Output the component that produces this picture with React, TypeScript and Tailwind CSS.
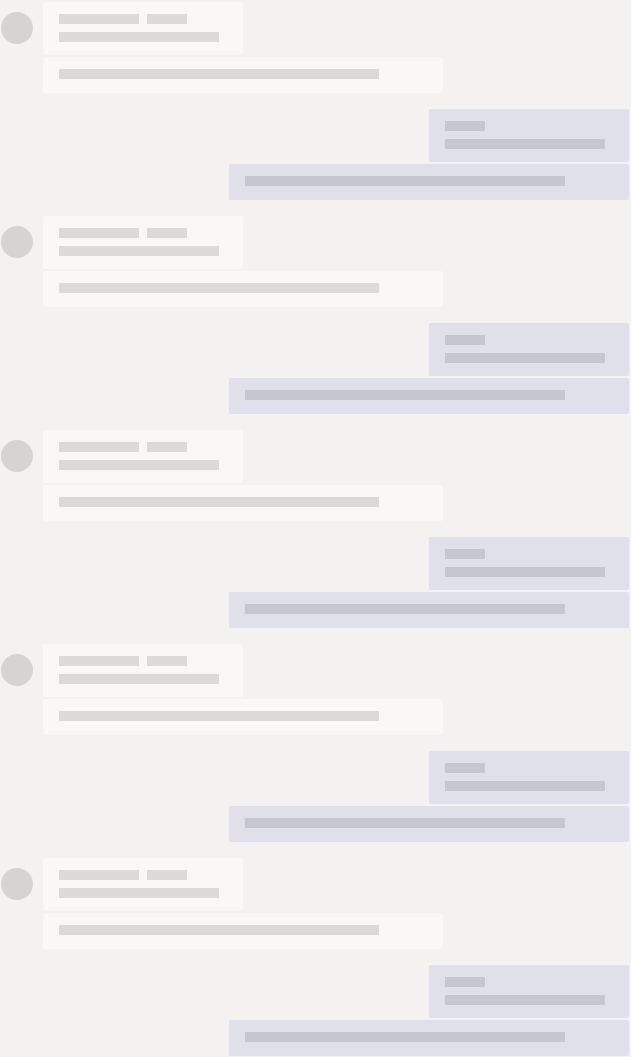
import { clsx } from "clsx";

type Tone = "received" | "sent";

function Bar({ tone, className }: { tone: Tone; className: string }) {
  return (
    <div
      className={clsx(
        "h-2.5",
        tone === "received" ? "bg-[#dbdad8]" : "bg-[#c6c6d0]",
        className,
      )}
    />
  );
}

function Bubbles({ tone }: { tone: Tone }) {
  const bubble = clsx(
    "rounded-xs px-4 pt-3",
    tone === "received" ? "bg-[#f9f8f6]" : "bg-[#e0e0eb]",
  );
  return (
    <div
      className={clsx(
        "flex min-w-0 flex-1 flex-col gap-0.5",
        tone === "received" ? "items-start" : "items-end",
      )}
    >
      <div className={clsx(bubble, "flex w-50 flex-col gap-2 pb-[13px]")}>
        <div className="flex gap-2">
          {tone === "received" && <Bar tone={tone} className="w-20" />}
          <Bar tone={tone} className="w-10" />
        </div>
        <Bar tone={tone} className="w-40" />
      </div>
      <div className={clsx(bubble, "w-full max-w-100 pb-3.5")}>
        <Bar tone={tone} className="w-full max-w-80" />
      </div>
    </div>
  );
}

export default function App() {
  return (
    <main
      aria-busy="true"
      aria-label="Loading conversation"
      className="flex min-h-screen flex-col gap-4 bg-[#f3f2f0] pt-0.5 pr-0.5 pb-px pl-px"
    >
      {[0, 1, 2, 3, 4].map((n) => (
        <section key={n} className="flex flex-col gap-4">
          <div className="flex items-start gap-2.5">
            <div className="mt-2.5 size-8 shrink-0 rounded-full bg-[#d5d4d2]" />
            <Bubbles tone="received" />
          </div>
          <div className="flex">
            <Bubbles tone="sent" />
          </div>
        </section>
      ))}
    </main>
  );
}
